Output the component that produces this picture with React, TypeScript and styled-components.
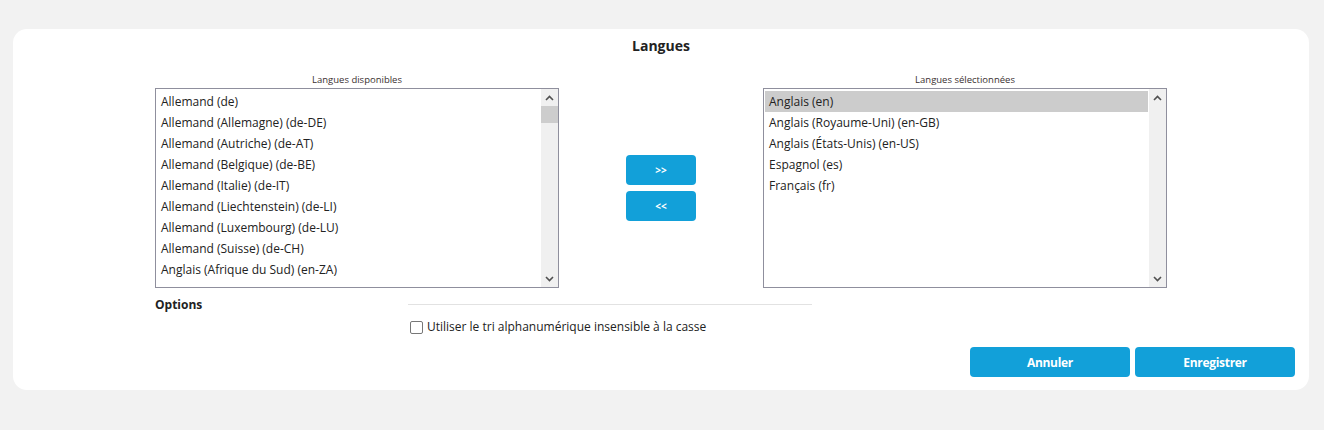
import React from "react";
import styled, { createGlobalStyle } from "styled-components";

const GlobalStyle = createGlobalStyle`
  html, body { margin: 0; padding: 0; background: #f2f2f2; }
  body { font-family: "Open Sans", "Liberation Sans", sans-serif; color: #222; }
  * { box-sizing: border-box; }
`;

const Page = styled.div`
  width: 1324px;
  height: 430px;
  padding: 29px 15px 0 13px;
`;

const Card = styled.div`
  background: #fff;
  border-radius: 14px;
  height: 361px;
  padding: 6px 14px 0 14px;
  display: flex;
  flex-direction: column;
`;

const Title = styled.h1`
  margin: 0;
  text-align: center;
  font-size: 14px;
  font-weight: 700;
  line-height: 22px;
  color: #222;
`;

const Transfer = styled.div`
  margin-top: 16px;
  display: flex;
  justify-content: center;
  gap: 67px;
`;

const Column = styled.div`
  width: 404px;
  display: flex;
  flex-direction: column;
`;

const ListLabel = styled.div`
  text-align: center;
  font-size: 9.5px;
  line-height: 13px;
  color: #3a3030;
  margin-bottom: 2px;
`;

const ListBox = styled.div`
  height: 200px;
  border: 1px solid #8f8f9d;
  display: flex;
  background: #fff;
`;

const Items = styled.div`
  flex: 1;
  padding: 2px 1px 0 1px;
  overflow: hidden;
`;

const Item = styled.div<{ $selected?: boolean }>`
  height: 21px;
  line-height: 21px;
  padding-left: 4px;
  font-size: 12px;
  white-space: nowrap;
  color: #222;
  background: ${(p) => (p.$selected ? "#cccccc" : "transparent")};
`;

const ScrollTrack = styled.div`
  width: 17px;
  background: #f0f0f0;
  display: flex;
  flex-direction: column;
`;

const ScrollArrow = styled.div`
  height: 17px;
  display: flex;
  align-items: center;
  justify-content: center;
`;

const ScrollSpace = styled.div`
  flex: 1;
`;

const Thumb = styled.div`
  height: 17px;
  background: #cdcdcd;
`;

const Middle = styled.div`
  width: 70px;
  display: flex;
  flex-direction: column;
  gap: 6px;
  padding-top: 82px;
`;

const ArrowButton = styled.button`
  height: 30px;
  width: 70px;
  border: none;
  border-radius: 4px;
  background: #12a0d9;
  color: #fff;
  font-family: "Open Sans", "Liberation Sans", sans-serif;
  font-size: 10px;
  font-weight: 700;
  padding: 0;
`;

const OptionsRow = styled.div`
  display: flex;
  margin-top: 9px;
  padding-left: 128px;
`;

const OptionsLabel = styled.div`
  width: 253px;
  font-size: 12px;
  font-weight: 700;
  line-height: 16px;
  color: #222;
`;

const OptionsBody = styled.div`
  width: 404px;
  display: flex;
  flex-direction: column;
`;

const Divider = styled.div`
  height: 1px;
  background: #e2e2e2;
  margin-top: 7px;
`;

const CheckRow = styled.label`
  display: flex;
  align-items: center;
  gap: 4px;
  margin-top: 14px;
  padding-left: 2px;
  font-size: 12px;
  line-height: 16px;
  color: #222;
`;

const Box = styled.span`
  width: 13px;
  height: 13px;
  border: 1.5px solid #777;
  border-radius: 2px;
  background: #fff;
`;

const Footer = styled.div`
  margin-top: auto;
  margin-bottom: 13px;
  display: flex;
  justify-content: flex-end;
  gap: 5px;
`;

const FooterButton = styled.button`
  width: 160px;
  height: 30px;
  border: none;
  border-radius: 4px;
  background: #12a0d9;
  color: #fff;
  font-family: "Open Sans", "Liberation Sans", sans-serif;
  font-size: 12px;
  font-weight: 700;
  letter-spacing: -0.3px;
`;

const Chevron = ({ up }: { up?: boolean }) => (
  <svg width="9" height="6" viewBox="0 0 9 6">
    <path
      d={up ? "M1 5 L4.5 1.5 L8 5" : "M1 1 L4.5 4.5 L8 1"}
      fill="none"
      stroke="#505050"
      strokeWidth="1.6"
    />
  </svg>
);

const Scrollbar = ({ thumb }: { thumb?: boolean }) => (
  <ScrollTrack>
    <ScrollArrow>
      <Chevron up />
    </ScrollArrow>
    {thumb && <Thumb />}
    <ScrollSpace />
    <ScrollArrow>
      <Chevron />
    </ScrollArrow>
  </ScrollTrack>
);

const available = [
  "Allemand (de)",
  "Allemand (Allemagne) (de-DE)",
  "Allemand (Autriche) (de-AT)",
  "Allemand (Belgique) (de-BE)",
  "Allemand (Italie) (de-IT)",
  "Allemand (Liechtenstein) (de-LI)",
  "Allemand (Luxembourg) (de-LU)",
  "Allemand (Suisse) (de-CH)",
  "Anglais (Afrique du Sud) (en-ZA)",
];

const selected = [
  "Anglais (en)",
  "Anglais (Royaume-Uni) (en-GB)",
  "Anglais (États-Unis) (en-US)",
  "Espagnol (es)",
  "Français (fr)",
];

export default function App() {
  return (
    <>
      <GlobalStyle />
      <Page>
        <Card>
          <Title>Langues</Title>
          <Transfer>
            <Column>
              <ListLabel>Langues disponibles</ListLabel>
              <ListBox>
                <Items>
                  {available.map((a) => (
                    <Item key={a}>{a}</Item>
                  ))}
                </Items>
                <Scrollbar thumb />
              </ListBox>
            </Column>
            <Middle>
              <ArrowButton>&gt;&gt;</ArrowButton>
              <ArrowButton>&lt;&lt;</ArrowButton>
            </Middle>
            <Column>
              <ListLabel>Langues sélectionnées</ListLabel>
              <ListBox>
                <Items>
                  {selected.map((a, i) => (
                    <Item key={a} $selected={i === 0}>
                      {a}
                    </Item>
                  ))}
                </Items>
                <Scrollbar />
              </ListBox>
            </Column>
          </Transfer>
          <OptionsRow>
            <OptionsLabel>Options</OptionsLabel>
            <OptionsBody>
              <Divider />
              <CheckRow>
                <Box />
                Utiliser le tri alphanumérique insensible à la casse
              </CheckRow>
            </OptionsBody>
          </OptionsRow>
          <Footer>
            <FooterButton>Annuler</FooterButton>
            <FooterButton>Enregistrer</FooterButton>
          </Footer>
        </Card>
      </Page>
    </>
  );
}
